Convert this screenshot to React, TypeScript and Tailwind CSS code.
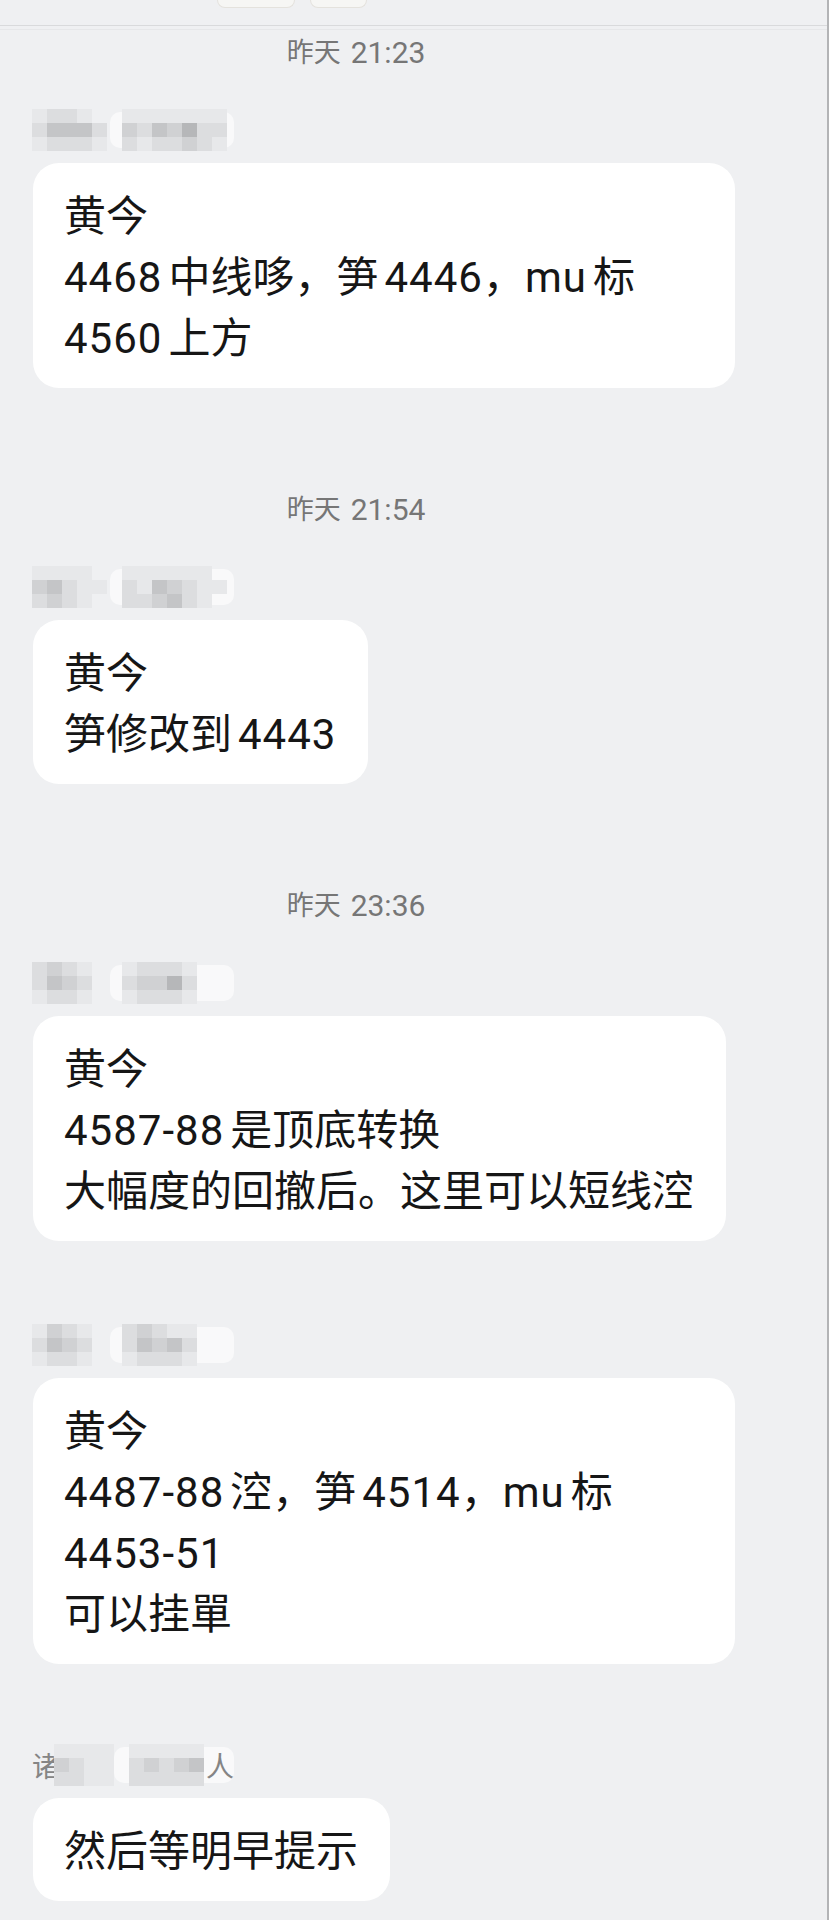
import clsx from 'clsx'

interface Msg {
  id: number
  time?: [string, string]
  name: number[][]
  nameEnds?: [string, string]
  lines: string[]
  wide?: boolean
}

// gray levels for the pixelated (mosaic) sender names
const shades = [
  'bg-transparent',
  'bg-[#e7e8ea]',
  'bg-[#dcdddf]',
  'bg-[#d0d1d3]',
  'bg-[#c4c5c7]',
  'bg-[#b6b7b9]',
]

const messages: Msg[] = [
  {
    id: 1,
    time: ['昨天', '21:23'],
    name: [
      [1, 2, 2, 1, 0, 0, 1, 1, 1, 1, 1, 1, 1],
      [2, 4, 4, 4, 2, 0, 3, 2, 4, 3, 5, 2, 2],
      [1, 2, 2, 2, 1, 0, 2, 1, 2, 2, 3, 2, 1],
    ],
    lines: ['黄今', '4468中线哆，笋4446，mu标', '4560上方'],
    wide: true,
  },
  {
    id: 2,
    time: ['昨天', '21:54'],
    name: [
      [1, 1, 1, 1, 0, 0, 1, 1, 1, 1, 1, 1, 0],
      [3, 4, 2, 1, 1, 0, 2, 1, 4, 3, 2, 1, 1],
      [2, 3, 2, 1, 0, 0, 2, 2, 3, 4, 2, 1, 0],
    ],
    lines: ['黄今', '笋修改到4443'],
  },
  {
    id: 3,
    time: ['昨天', '23:36'],
    name: [
      [2, 3, 2, 1, 0, 0, 1, 2, 2, 2, 1, 0, 0],
      [2, 4, 3, 2, 0, 0, 2, 3, 3, 5, 2, 0, 0],
      [1, 2, 2, 1, 0, 0, 1, 2, 2, 2, 1, 0, 0],
    ],
    lines: ['黄今', '4587-88是顶底转换', '大幅度的回撤后。这里可以短线涳'],
  },
  {
    id: 4,
    name: [
      [1, 3, 2, 1, 0, 0, 2, 3, 2, 1, 1, 0, 0],
      [2, 4, 3, 2, 0, 0, 2, 4, 3, 4, 2, 0, 0],
      [1, 2, 2, 1, 0, 0, 1, 2, 2, 2, 1, 0, 0],
    ],
    lines: ['黄今', '4487-88涳，笋4514，mu标', '4453-51', '可以挂單'],
    wide: true,
  },
  {
    id: 5,
    name: [
      [1, 1, 1, 1, 0, 1, 1, 1, 1, 1],
      [3, 2, 1, 1, 0, 2, 3, 2, 3, 4],
      [2, 2, 1, 1, 0, 2, 2, 2, 2, 2],
    ],
    nameEnds: ['诸', '人'],
    lines: ['然后等明早提示'],
  },
]

// adds the small gap that the phone puts between latin runs and han characters
function Line({ text }: { text: string }) {
  const parts = text.match(/[\x00-\x7f]+|[^\x00-\x7f]+/g) ?? []
  return (
    <div>
      {parts.map((p, i) => {
        if (!/^[\x00-\x7f]+$/.test(p)) return <span key={i}>{p}</span>
        const prev = parts[i - 1]
        const next = parts[i + 1]
        const before = prev !== undefined && !/[，。]$/.test(prev)
        const after = next !== undefined && !/^[，。]/.test(next)
        return (
          <span
            key={i}
            className={clsx('tracking-[1px]', before && 'ml-[6px]', after && 'mr-[6px]')}
          >
            {p}
          </span>
        )
      })}
    </div>
  )
}

function NameMosaic({ rows, ends }: { rows: number[][]; ends?: [string, string] }) {
  return (
    <div className="flex h-[42px] items-center pl-[32px]">
      {ends && (
        <span className="-mr-[6px] text-[28px] leading-none text-[#858585] font-['Noto_Sans_CJK_SC',sans-serif]">
          {ends[0]}
        </span>
      )}
      <div className="relative">
        <div
          className={clsx(
            'absolute top-[3px] h-[36px] rounded-[10px] bg-white/60',
            ends ? 'left-[60px] w-[120px]' : 'left-[78px] w-[124px]',
          )}
        />
        <div className="relative flex flex-col">
          {rows.map((r, ri) => (
            <div key={ri} className="flex">
              {r.map((v, ci) => (
                <div key={ci} className={clsx('h-[14px] w-[15px]', shades[v])} />
              ))}
            </div>
          ))}
        </div>
      </div>
      {ends && (
        <span className="relative ml-[2px] text-[28px] leading-none text-[#858585] font-['Noto_Sans_CJK_SC',sans-serif]">
          {ends[1]}
        </span>
      )}
    </div>
  )
}

export default function App() {
  return (
    <div className="w-[829px] min-h-[1920px] overflow-hidden border-r-[2px] border-[#b3b4b6] bg-[#eff0f2] pb-[19px]">
      {/* Top bar with the cut-off buttons */}
      <div className="h-[26px] border-b border-[#d9dadc]">
        <div className="flex gap-[15px] pl-[217px]">
          <div className="h-[8px] w-[78px] rounded-b-[14px] border-x border-b border-[#e4e2dd] bg-[#f6f6f4]" />
          <div className="h-[8px] w-[57px] rounded-b-[14px] border-x border-b border-[#e4e2dd] bg-[#f6f6f4]" />
        </div>
      </div>
      <div className="mt-[3px] h-px bg-[#e6e7e9]" />

      <div className="flex flex-col">
        {messages.map((m, idx) => (
          <div
            key={m.id}
            className={clsx(
              'flex flex-col',
              idx === 0 && 'mt-[3px]',
              idx > 0 && m.time && 'mt-[102px]',
              idx === 3 && 'mt-[83px]',
              idx === 4 && 'mt-[80px]',
            )}
          >
            {m.time && (
              <div className="flex h-[40px] w-[712px] items-center justify-center gap-[10px] text-[#767676] font-['Roboto','Noto_Sans_CJK_SC',sans-serif]">
                <span className="text-[27px] leading-[40px]">{m.time[0]}</span>
                <span className="text-[30px] leading-[40px]">{m.time[1]}</span>
              </div>
            )}
            <div className={clsx(m.time && 'mt-[36px]')}>
              <NameMosaic rows={m.name} ends={m.nameEnds} />
            </div>
            <div
              className={clsx(
                'ml-[33px] mt-[12px] rounded-[26px] bg-white pb-[19px] pl-[31px] pr-[32px] pt-[23px] text-[42px] leading-[61px] text-[#161616] font-["Roboto","Noto_Sans_CJK_SC",sans-serif]',
                m.wide ? 'w-[702px]' : 'w-fit',
              )}
            >
              {m.lines.map((l, i) => (
                <Line key={i} text={l} />
              ))}
            </div>
          </div>
        ))}
      </div>
    </div>
  )
}
